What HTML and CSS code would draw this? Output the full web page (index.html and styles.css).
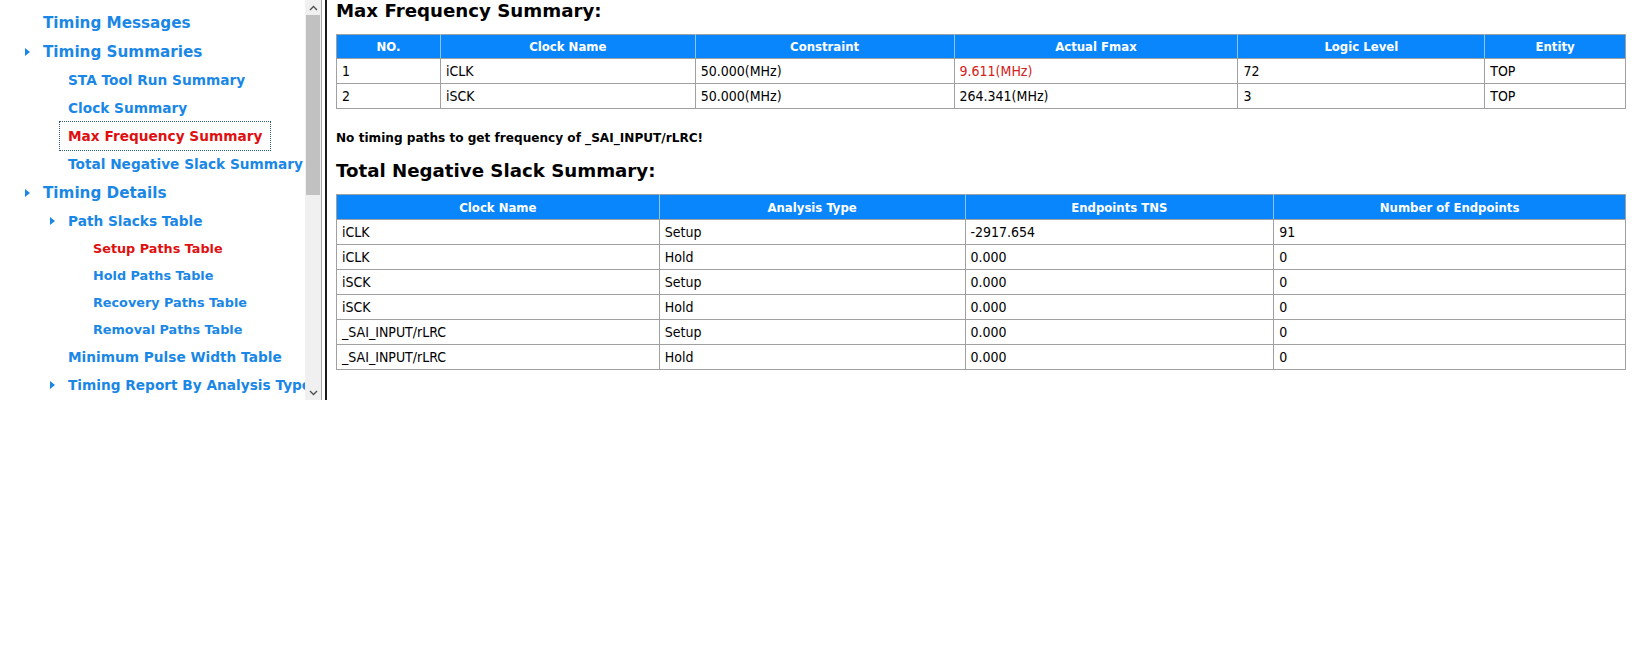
FILE: index.html
```html
<!DOCTYPE html>
<html lang="en">

<head>
  <meta charset="UTF-8" />
  <meta name="viewport" content="width=device-width, initial-scale=1.0" />
  <title>Timing Report</title>
  <link rel="stylesheet" href="styles.css">
</head>

<body>
  <div class="frame_left">
    <div class="nav">
      <div class="item lvl1">Timing Messages</div>
      <div class="item lvl1"><span class="arrow"></span>Timing Summaries</div>
      <div class="item lvl2">STA Tool Run Summary</div>
      <div class="item lvl2">Clock Summary</div>
      <div class="item lvl2"><span class="focus active">Max Frequency Summary</span></div>
      <div class="item lvl2">Total Negative Slack Summary</div>
      <div class="item lvl1"><span class="arrow"></span>Timing Details</div>
      <div class="item lvl2"><span class="arrow"></span>Path Slacks Table</div>
      <div class="item lvl3 active">Setup Paths Table</div>
      <div class="item lvl3">Hold Paths Table</div>
      <div class="item lvl3">Recovery Paths Table</div>
      <div class="item lvl3">Removal Paths Table</div>
      <div class="item lvl2">Minimum Pulse Width Table</div>
      <div class="item lvl2"><span class="arrow"></span>Timing Report By Analysis Type</div>
    </div>

    <div class="scrollbar">
      <div class="scroll_btn">
        <svg width="9" height="6" viewBox="0 0 9 6"><path d="M1 5 L4.5 1.5 L8 5" fill="none" stroke="#505050" stroke-width="1.4" /></svg>
      </div>
      <div class="scroll_thumb"></div>
      <div class="scroll_track"></div>
      <div class="scroll_btn">
        <svg width="9" height="6" viewBox="0 0 9 6"><path d="M1 1 L4.5 4.5 L8 1" fill="none" stroke="#505050" stroke-width="1.4" /></svg>
      </div>
    </div>
  </div>

  <div class="main">
    <h2>Max Frequency Summary:</h2>
    <table class="grid fmax">
      <colgroup>
        <col><col><col><col><col><col>
      </colgroup>
      <tr>
        <th>NO.</th>
        <th>Clock Name</th>
        <th>Constraint</th>
        <th>Actual Fmax</th>
        <th>Logic Level</th>
        <th>Entity</th>
      </tr>
      <tr>
        <td>1</td>
        <td>iCLK</td>
        <td>50.000(MHz)</td>
        <td class="fail">9.611(MHz)</td>
        <td>72</td>
        <td>TOP</td>
      </tr>
      <tr>
        <td>2</td>
        <td>iSCK</td>
        <td>50.000(MHz)</td>
        <td>264.341(MHz)</td>
        <td>3</td>
        <td>TOP</td>
      </tr>
    </table>

    <p class="note">No timing paths to get frequency of _SAI_INPUT/rLRC!</p>

    <h2 class="second">Total Negative Slack Summary:</h2>
    <table class="grid tns">
      <colgroup>
        <col><col><col><col>
      </colgroup>
      <tr>
        <th>Clock Name</th>
        <th>Analysis Type</th>
        <th>Endpoints TNS</th>
        <th>Number of Endpoints</th>
      </tr>
      <tr>
        <td>iCLK</td>
        <td>Setup</td>
        <td>-2917.654</td>
        <td>91</td>
      </tr>
      <tr>
        <td>iCLK</td>
        <td>Hold</td>
        <td>0.000</td>
        <td>0</td>
      </tr>
      <tr>
        <td>iSCK</td>
        <td>Setup</td>
        <td>0.000</td>
        <td>0</td>
      </tr>
      <tr>
        <td>iSCK</td>
        <td>Hold</td>
        <td>0.000</td>
        <td>0</td>
      </tr>
      <tr>
        <td>_SAI_INPUT/rLRC</td>
        <td>Setup</td>
        <td>0.000</td>
        <td>0</td>
      </tr>
      <tr>
        <td>_SAI_INPUT/rLRC</td>
        <td>Hold</td>
        <td>0.000</td>
        <td>0</td>
      </tr>
    </table>
  </div>
</body>

</html>
```

FILE: styles.css
```css
body {
  margin: 0;
  padding: 0;
  display: flex;
  align-items: flex-start;
  background-color: white;
  font-family: "DejaVu Sans", Verdana, sans-serif;
}

.frame_left {
  display: flex;
  height: 400px;
  border-right: 2px solid #1a1a1a;
  padding-right: 3px;
  flex-shrink: 0;
}

.nav {
  width: 305px;
  padding-top: 8px;
  overflow: hidden;
  white-space: nowrap;
  font-weight: bold;
  color: #1a87e6;
}

.item {
  display: flex;
  align-items: center;
}

.lvl1 {
  height: 29px;
  padding-left: 43px;
  font-size: 15.2px;
}

.lvl2 {
  height: 28px;
  padding-left: 68px;
  font-size: 13.7px;
}

.lvl3 {
  height: 27px;
  padding-left: 93px;
  font-size: 12.8px;
}

.arrow {
  width: 0;
  height: 0;
  border-top: 4.5px solid transparent;
  border-bottom: 4.5px solid transparent;
  border-left: 5px solid #1a87e6;
  margin-left: -18px;
  margin-right: 13px;
}

.active {
  color: #e01010;
}

.focus {
  outline: 1px dotted #2f5d70;
  padding: 6px 8px;
  margin-left: -8px;
}

.scrollbar {
  width: 16px;
  display: flex;
  flex-direction: column;
  background-color: #f0f0f0;
  border-right: 1px solid #a8a8a8;
}

.scroll_btn {
  height: 15px;
  display: flex;
  align-items: center;
  justify-content: center;
}

.scroll_thumb {
  height: 180px;
  margin: 0 1px;
  background-color: #c1c1c1;
}

.scroll_track {
  flex: 1;
}

.main {
  flex: 1;
  padding: 0 7px 0 9px;
}

h2 {
  margin: 0;
  font-size: 18.2px;
  line-height: 21px;
  color: #000;
}

.grid {
  width: 100%;
  margin-top: 13px;
  border-collapse: collapse;
  table-layout: fixed;
  font-family: "DejaVu Sans Condensed", Tahoma, sans-serif;
  font-size: 14px;
}

.grid th {
  height: 23px;
  padding: 0 5px;
  background-color: #0a86fc;
  color: white;
  font-size: 13px;
  font-weight: bold;
  border: 1px solid #a0a0a0;
  border-left-color: #8cc4f5;
  border-right-color: #8cc4f5;
}

.grid th:first-child {
  border-left-color: #a0a0a0;
}

.grid th:last-child {
  border-right-color: #a0a0a0;
}

.grid td {
  height: 24px;
  padding: 0 5px;
  text-align: left;
  border: 1px solid #a0a0a0;
  color: #000;
}

.grid td.fail {
  color: #d42020;
}

.fmax col:nth-child(1) { width: 8.06%; }
.fmax col:nth-child(2) { width: 19.77%; }
.fmax col:nth-child(3) { width: 20.08%; }
.fmax col:nth-child(4) { width: 22.02%; }
.fmax col:nth-child(5) { width: 19.15%; }
.fmax col:nth-child(6) { width: 10.92%; }

.tns col:nth-child(1) { width: 25.04%; }
.tns col:nth-child(2) { width: 23.72%; }
.tns col:nth-child(3) { width: 23.95%; }
.tns col:nth-child(4) { width: 27.29%; }

.tns th {
  height: 24px;
}

.note {
  margin: 22px 0 0 0;
  font-size: 12.1px;
  line-height: 14px;
  font-weight: bold;
  color: #000;
}

.second {
  margin-top: 15px;
}
```
